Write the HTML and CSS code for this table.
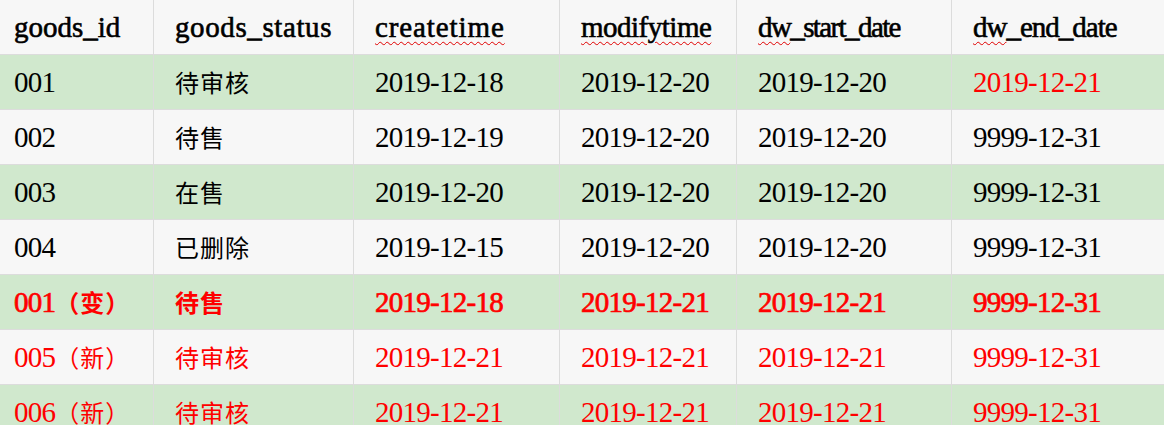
FILE: index.html
```html
<!DOCTYPE html>
<html lang="zh">
<head>
<meta charset="utf-8">
<title>goods</title>
<link rel="stylesheet" href="styles.css">
</head>
<body>
<div class="grid">
  <div class="cell head first">goods_id</div>
  <div class="cell head h-status">goods_status</div>
  <div class="cell head h-create"><span class="spell">createtime</span></div>
  <div class="cell head h-modify"><span class="spell">modifytime</span></div>
  <div class="cell head h-start"><span class="spell">dw</span>_start_date</div>
  <div class="cell head last h-end"><span class="spell">dw</span>_end_date</div>

  <div class="cell green first">001</div>
  <div class="cell green"><span class="cjk">待审核</span></div>
  <div class="cell green">2019-12-18</div>
  <div class="cell green">2019-12-20</div>
  <div class="cell green">2019-12-20</div>
  <div class="cell green last red">2019-12-21</div>

  <div class="cell plain first">002</div>
  <div class="cell plain"><span class="cjk">待售</span></div>
  <div class="cell plain">2019-12-19</div>
  <div class="cell plain">2019-12-20</div>
  <div class="cell plain">2019-12-20</div>
  <div class="cell plain last">9999-12-31</div>

  <div class="cell green first">003</div>
  <div class="cell green"><span class="cjk">在售</span></div>
  <div class="cell green">2019-12-20</div>
  <div class="cell green">2019-12-20</div>
  <div class="cell green">2019-12-20</div>
  <div class="cell green last">9999-12-31</div>

  <div class="cell plain first">004</div>
  <div class="cell plain"><span class="cjk">已删除</span></div>
  <div class="cell plain">2019-12-15</div>
  <div class="cell plain">2019-12-20</div>
  <div class="cell plain">2019-12-20</div>
  <div class="cell plain last">9999-12-31</div>

  <div class="cell green first red bold">001<span class="cjk">（变）</span></div>
  <div class="cell green red bold"><span class="cjk">待售</span></div>
  <div class="cell green red bold">2019-12-18</div>
  <div class="cell green red bold">2019-12-21</div>
  <div class="cell green red bold">2019-12-21</div>
  <div class="cell green last red bold">9999-12-31</div>

  <div class="cell plain first red">005<span class="cjk">（新）</span></div>
  <div class="cell plain red"><span class="cjk">待审核</span></div>
  <div class="cell plain red">2019-12-21</div>
  <div class="cell plain red">2019-12-21</div>
  <div class="cell plain red">2019-12-21</div>
  <div class="cell plain last red">9999-12-31</div>

  <div class="cell green first red">006<span class="cjk">（新）</span></div>
  <div class="cell green red"><span class="cjk">待审核</span></div>
  <div class="cell green red">2019-12-21</div>
  <div class="cell green red">2019-12-21</div>
  <div class="cell green red">2019-12-21</div>
  <div class="cell green last red">9999-12-31</div>
</div>
</body>
</html>
```

FILE: styles.css
```css
html, body {
  margin: 0;
  padding: 0;
  background: #f7f7f7;
}

body {
  width: 1164px;
  height: 425px;
  overflow: hidden;
  font-family: "Liberation Serif", "Noto Sans CJK SC", serif;
  font-size: 29px;
  color: #000;
}

.grid {
  display: grid;
  grid-template-columns: 154px 200px 206px 177px 215px 212px;
  grid-auto-rows: 55px;
}

.cell {
  display: flex;
  align-items: center;
  padding-left: 21px;
  letter-spacing: -0.73px;
  line-height: 1;
  border-right: 1px solid #dcdcdc;
  border-bottom: 1px solid #dcdcdc;
  white-space: nowrap;
  overflow: hidden;
}

.cell.first {
  padding-left: 14px;
}

.cell.last {
  border-right: none;
}

.head {
  background: #f7f7f7;
  letter-spacing: 0;
  -webkit-text-stroke: 0.6px currentColor;
}

.h-status { letter-spacing: 0.6px; }
.h-create { letter-spacing: 0.9px; }
.h-modify { letter-spacing: -0.5px; }
.h-start { letter-spacing: -1.6px; }
.h-end { letter-spacing: -1px; }

.plain {
  background: #f7f7f7;
}

.green {
  background: #d0e8cd;
}

.red {
  color: #ff0000;
}

.bold {
  -webkit-text-stroke: 0.7px currentColor;
}

.cjk {
  font-family: "Noto Sans CJK SC", sans-serif;
  font-size: 24px;
  letter-spacing: 1px;
  -webkit-text-stroke: 0;
}

.bold .cjk {
  font-weight: 700;
}

.spell {
  text-decoration: underline wavy #e00000;
  text-decoration-thickness: 1px;
  text-underline-offset: 4px;
  -webkit-text-stroke: 0.6px #000;
}
```
